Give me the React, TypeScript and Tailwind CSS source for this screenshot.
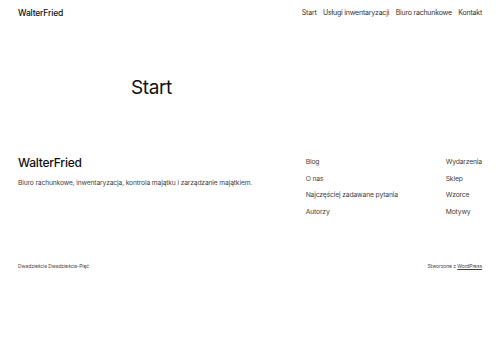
export default function App() {
  const font = { fontFamily: "Inter, 'Noto Sans', sans-serif" };
  return (
    <div className="w-[500px] h-[348px] bg-white text-[#111] overflow-hidden" style={font}>
      {/* Header */}
      <header className="h-[26px] px-[18px] flex items-center justify-between">
        <span className="text-[8.5px] font-medium tracking-[-0.02em]">WalterFried</span>
        <nav className="flex items-center gap-[6.5px] text-[7px] text-[#333] tracking-[-0.03em]">
          <span>Start</span>
          <span>Usługi inwentaryzacji</span>
          <span>Biuro rachunkowe</span>
          <span>Kontakt</span>
        </nav>
      </header>

      {/* Title */}
      <main className="pt-[50px] pl-[131px] h-[128px]">
        <h1 className="text-[19px] leading-[24px] font-normal tracking-[-0.02em]">Start</h1>
      </main>

      {/* Footer */}
      <footer className="px-[18px]">
        <div className="flex">
          <div className="flex-1 pt-[1px]">
            <div className="text-[12px] leading-[16px] font-medium tracking-[-0.02em]">WalterFried</div>
            <p className="mt-[8px] text-[6.7px] leading-[8px] text-[#444] tracking-[-0.02em]">
              Biuro rachunkowe, inwentaryzacja, kontrola majątku i zarządzanie majątkiem.
            </p>
          </div>
          <ul className="w-[140px] pt-[4px] flex flex-col gap-[8.6px] text-[6.8px] leading-[8px] text-[#444] tracking-[-0.025em]">
            <li>Blog</li>
            <li>O nas</li>
            <li>Najczęściej zadawane pytania</li>
            <li>Autorzy</li>
          </ul>
          <ul className="pt-[4px] flex flex-col gap-[8.6px] text-[6.8px] leading-[8px] text-[#444] tracking-[-0.025em]">
            <li>Wydarzenia</li>
            <li>Sklep</li>
            <li>Wzorce</li>
            <li>Motywy</li>
          </ul>
        </div>
        <div className="mt-[47px] flex justify-between text-[5px] leading-[6px] text-[#444] tracking-[-0.02em]">
          <span>Dwadzieścia Dwadzieścia-Pięć</span>
          <span>
            Stworzone z <span className="underline">WordPress</span>
          </span>
        </div>
      </footer>
    </div>
  );
}
